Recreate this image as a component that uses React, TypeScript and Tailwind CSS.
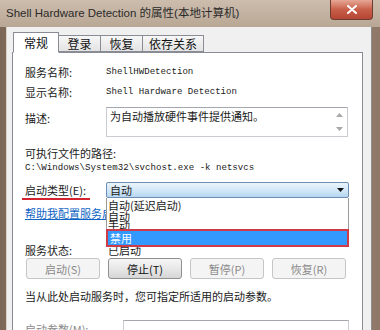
import React from "react";

const cjk = "font-['Noto_Sans_CJK_SC','Noto_Sans',sans-serif]";
const mono = "font-['Liberation_Mono','Noto_Sans_CJK_SC',monospace]";

const Tab = ({ label, active, w }: { label: string; active?: boolean; w: string }) => (
    <div
        className={`${w} flex items-center justify-center border border-[#898c95] -mr-px ${
            active
                ? "h-[21px] bg-white border-b-white relative z-10 -mb-px"
                : "h-[17px] bg-gradient-to-b from-[#f7f7f7] to-[#e3e3e3]"
        }`}
    >
        <span className="text-[12px] leading-[14px] text-[#111]">{label}</span>
    </div>
);

const Btn = ({ label, disabled }: { label: string; disabled?: boolean }) => (
    <div
        className={`w-[74px] h-[21px] rounded-[3px] border flex items-center justify-center text-[11px] leading-[14px] ${
            disabled
                ? "border-[#c4c6c8] bg-[#f4f4f4] text-[#8a8a8a]"
                : "border-[#8e8f8f] bg-gradient-to-b from-[#f6f6f6] via-[#e8e8e8] to-[#d6d6d6] text-[#111]"
        }`}
    >
        {label}
    </div>
);

export default function App() {
    return (
        <div className={`w-[380px] h-[330px] overflow-hidden bg-gradient-to-r from-[#7d6757] via-[#b09c8b] to-[#8f7868] ${cjk}`}>
            {/* title bar */}
            <div className="h-[27px] flex items-start justify-between bg-gradient-to-b from-[#cdbdad] to-[#b9a795] pl-[6px] pr-[7px]">
                <span className="mt-[6px] text-[11.5px] leading-[15px] text-[#2a2a2a] font-['Liberation_Sans','Noto_Sans_CJK_SC',sans-serif] whitespace-nowrap">
                    Shell Hardware Detection 的属性(本地计算机)
                </span>
                <div className="w-[43px] h-[20px] rounded-b-[4px] border border-t-0 border-[#6e3c31] bg-gradient-to-b from-[#e6a796] via-[#c85f49] to-[#b54534] flex items-center justify-center">
                    <svg width="10" height="9" viewBox="0 0 10 9">
                        <path d="M1 1 L9 8 M9 1 L1 8" stroke="#fff" strokeWidth="2" strokeLinecap="round" />
                    </svg>
                </div>
            </div>

            {/* body */}
            <div className="flex h-[303px]">
                <div className="w-[7px] border-r border-[#d8cfc6]" />
                <div className="flex-1 bg-[#f0f0f0] pt-[5px] pl-[5px] pr-[8px] border-r border-[#8e8e8e]">
                    {/* tabs */}
                    <div className="flex items-end h-[20px] pl-px">
                        <Tab label="常规" active w="w-[46px]" />
                        <Tab label="登录" w="w-[43px]" />
                        <Tab label="恢复" w="w-[43px]" />
                        <Tab label="依存关系" w="w-[62px]" />
                    </div>

                    {/* panel */}
                    <div className="h-[290px] bg-white border border-[#898c95] pl-[12px] pr-[13px] text-[11px] text-[#1a1a1a]">
                        <div className="flex items-center h-[16px] mt-[11px]">
                            <span className="w-[81px] leading-[16px]">服务名称:</span>
                            <span className={`${mono} text-[9.1px]`}>ShellHWDetection</span>
                        </div>
                        <div className="flex items-center h-[16px] mt-[4px]">
                            <span className="w-[81px] leading-[16px]">显示名称:</span>
                            <span className={`${mono} text-[9.1px]`}>Shell Hardware Detection</span>
                        </div>
                        <div className="flex items-start mt-[7px]">
                            <span className="w-[81px] leading-[16px] pt-[3px]">描述:</span>
                            <div className="w-[242px] h-[30px] border border-[#c9ccd1] border-t-[#a4a7ad] flex justify-between pl-[3px] pr-[4px]">
                                <span className="leading-[14px] pt-px">为自动播放硬件事件提供通知。</span>
                                <div className="flex flex-col justify-between py-[5px]">
                                    <svg width="7" height="4" viewBox="0 0 7 4"><path d="M0 4 L3.5 0 L7 4 Z" fill="#a8a8a8" /></svg>
                                    <svg width="7" height="4" viewBox="0 0 7 4"><path d="M0 0 L3.5 4 L7 0 Z" fill="#a8a8a8" /></svg>
                                </div>
                            </div>
                        </div>
                        <div className="h-[16px] mt-[8px] leading-[16px]">可执行文件的路径:</div>
                        <div className={`h-[14px] leading-[14px] ${mono} text-[9.1px] whitespace-nowrap`}>
                            C:\Windows\System32\svchost.exe -k netsvcs
                        </div>

                        <div className="flex items-center h-[16px] mt-[7px]">
                            <span className="w-[81px] leading-[16px]">
                                <span className="relative">
                                    启动类型(E):
                                    <span className="absolute left-[-3px] right-[-4px] top-[16px] h-[2px] bg-[#d3232e]" />
                                </span>
                            </span>
                            <div className="relative w-[243px] h-[16px]">
                                <div className="h-full border border-[#6d8fb3] rounded-[2px] bg-gradient-to-b from-[#eaf4fc] via-[#d4e8f8] to-[#b5d6f1] flex items-center justify-between pl-[3px] pr-[4px]">
                                    <span className="leading-[14px]">自动</span>
                                    <svg width="7" height="4" viewBox="0 0 7 4"><path d="M0 0 L7 0 L3.5 4 Z" fill="#111" /></svg>
                                </div>
                                {/* open list */}
                                <div className="absolute left-0 top-full w-[243px] z-20 bg-white border-l border-r border-[#9a9a9a]">
                                    <div className="h-[12px] pl-[1px] leading-[14px] overflow-visible whitespace-nowrap">自动(延迟启动)</div>
                                    <div className="h-[10px] pl-[1px] leading-[12px] overflow-visible">自动</div>
                                    <div className="h-[9px] pl-[1px] leading-[10px] overflow-visible">手动</div>
                                    <div className="h-[18px] -mx-px border-2 border-[#cf3a48] bg-[#3399ff] pl-[2px] text-white leading-[14px] relative z-10">
                                        禁用
                                    </div>
                                </div>
                            </div>
                        </div>

                        <div className="h-[16px] mt-[7px] leading-[16px] text-[#0f64c4] underline whitespace-nowrap">
                            帮助我配置服务启动选项。
                        </div>

                        <div className="flex items-center h-[12px] mt-[23px]">
                            <span className="w-[83px] leading-[12px]">服务状态:</span>
                            <span className="leading-[12px]">已启动</span>
                        </div>
                        <div className="flex gap-[8px] mt-[2px] ml-px">
                            <Btn label="启动(S)" disabled />
                            <Btn label="停止(T)" />
                            <Btn label="暂停(P)" disabled />
                            <Btn label="恢复(R)" disabled />
                        </div>

                        <div className="h-[16px] mt-[9px] leading-[16px] whitespace-nowrap">
                            当从此处启动服务时，您可指定所适用的启动参数。
                        </div>

                        <div className="flex items-start mt-[16px]">
                            <span className="w-[98px] pt-[2px] leading-[14px] text-[#8a8a8a]">启动参数(M):</span>
                            <div className="w-[226px] h-[20px] border border-[#c9ccd1] border-t-[#a4a7ad]" />
                        </div>
                    </div>
                </div>
                <div className="w-[8px]" />
            </div>
        </div>
    );
}
